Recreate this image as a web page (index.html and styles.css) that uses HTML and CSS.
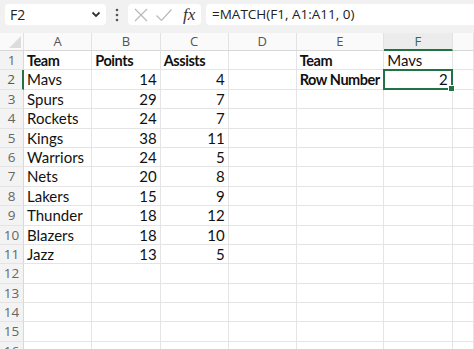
FILE: index.html
```html
<!DOCTYPE html>
<html lang="en">
<head>
    <meta charset="UTF-8">
    <meta name="viewport" content="width=device-width, initial-scale=1.0">
    <title>MATCH</title>
    <link rel="stylesheet" href="styles.css">
</head>
<body>
    <div class="toolbar">
        <div class="name-box">
            <span>F2</span>
            <svg class="chevron" width="10" height="7" viewBox="0 0 10 7"><path d="M1.5 1.5 L5 5 L8.5 1.5" fill="none" stroke="#333" stroke-width="1.8"/></svg>
        </div>
        <div class="dots">
            <svg width="4" height="14" viewBox="0 0 4 14"><circle cx="2" cy="2" r="1.3" fill="#555"/><circle cx="2" cy="7" r="1.3" fill="#555"/><circle cx="2" cy="12" r="1.3" fill="#555"/></svg>
        </div>
        <div class="actions">
            <svg width="16" height="16" viewBox="0 0 16 16"><path d="M2 2 L14 14 M14 2 L2 14" stroke="#b8b8b8" stroke-width="1.2" fill="none"/></svg>
            <svg width="18" height="16" viewBox="0 0 18 16"><path d="M1.5 8.5 L6.5 13.5 L16.5 2.5" stroke="#b8b8b8" stroke-width="1.2" fill="none"/></svg>
            <span class="fx">fx</span>
        </div>
        <div class="formula">=MATCH(F1, A1:A11, 0)</div>
    </div>

    <div class="sheet" id="sheet"></div>

    <script>
        // last column is only partly visible, so its letter is left out
        const cols = ["A", "B", "C", "D", "E", "F", ""];
        const data = {
            1: [["Team", "b"], ["Points", "b"], ["Assists", "b"], [""], ["Team", "b"], ["Mavs"]],
            2: [["Mavs"], ["14", "n"], ["4", "n"], [""], ["Row Number", "b"], ["2", "n sel"]],
            3: [["Spurs"], ["29", "n"], ["7", "n"]],
            4: [["Rockets"], ["24", "n"], ["7", "n"]],
            5: [["Kings"], ["38", "n"], ["11", "n"]],
            6: [["Warriors"], ["24", "n"], ["5", "n"]],
            7: [["Nets"], ["20", "n"], ["8", "n"]],
            8: [["Lakers"], ["15", "n"], ["9", "n"]],
            9: [["Thunder"], ["18", "n"], ["12", "n"]],
            10: [["Blazers"], ["18", "n"], ["10", "n"]],
            11: [["Jazz"], ["13", "n"], ["5", "n"]]
        };

        const sheet = document.getElementById("sheet");
        let html = '<div class="corner"><span></span></div>';
        cols.forEach(c => {
            html += `<div class="col-head${c === "F" ? " active" : ""}">${c}</div>`;
        });
        for (let r = 1; r <= 16; r++) {
            html += `<div class="row-head${r === 2 ? " active" : ""}">${r}</div>`;
            const row = data[r] || [];
            cols.forEach((c, i) => {
                const cell = row[i] || [""];
                html += `<div class="cell ${cell[1] || ""}">${cell[0]}</div>`;
            });
        }
        sheet.innerHTML = html;
    </script>
</body>
</html>
```

FILE: styles.css
```css
* {
    box-sizing: border-box;
}
body {
    margin: 0;
    padding: 0;
    width: 474px;
    height: 349px;
    overflow: hidden;
    background: #fff;
    font-family: Lato, "Open Sans", sans-serif;
}
.toolbar {
    height: 33px;
    background: #f1f1f1;
    display: flex;
    align-items: flex-start;
    padding-top: 4px;
    padding-left: 5px;
}
.name-box {
    width: 101px;
    height: 21px;
    background: #fff;
    border-radius: 4px;
    display: flex;
    align-items: center;
    justify-content: space-between;
    padding: 0 5px 0 5px;
    font-family: "Open Sans", sans-serif;
    font-size: 14px;
    color: #222;
}
.dots {
    width: 22px;
    height: 21px;
    display: flex;
    align-items: center;
    justify-content: center;
}
.actions {
    width: 73px;
    height: 21px;
    background: #fff;
    border-radius: 4px;
    display: flex;
    align-items: center;
    gap: 6px;
    padding-left: 5px;
}
.fx {
    font-family: "Liberation Serif", serif;
    font-style: italic;
    font-size: 17px;
    color: #333;
    margin-left: 4px;
}
.formula {
    flex: 1;
    height: 21px;
    margin-left: 5px;
    background: #fff;
    border-radius: 4px 0 0 4px;
    padding-left: 6px;
    font-family: "Open Sans", sans-serif;
    font-size: 13.5px;
    line-height: 21px;
    color: #222;
}
.sheet {
    display: grid;
    width: 474px;
    grid-template-columns: 24px 68.3px 68.4px 68px 68px 87.6px 68.4px 1fr;
    grid-template-rows: 18px;
    grid-auto-rows: 19.4px;
    font-size: 15px;
    color: #111;
}
.corner {
    background: #fafafa;
    border-right: 1px solid #e2e2e2;
    border-bottom: 1px solid #d8d8d8;
    position: relative;
}
.corner span {
    position: absolute;
    right: 2px;
    bottom: 2px;
    width: 0;
    height: 0;
    border-left: 12px solid transparent;
    border-bottom: 12px solid #dcdcdc;
}
.col-head {
    background: #fafafa;
    border-right: 1px solid #e2e2e2;
    border-bottom: 1px solid #d8d8d8;
    text-align: center;
    font-size: 13px;
    line-height: 17px;
    color: #555;
    font-family: "Open Sans", sans-serif;
}
.col-head.active {
    background: #ececec;
    color: #2f6e4a;
    border-bottom: 2px solid #217346;
}
.row-head {
    background: #f3f3f3;
    border-bottom: 1px solid #e4e4e4;
    border-right: 1px solid #d8d8d8;
    text-align: center;
    font-size: 13.5px;
    line-height: 19px;
    color: #666;
    font-family: "Open Sans", sans-serif;
}
.row-head.active {
    border-right: 2px solid #217346;
    color: #2f6e4a;
}
.cell {
    border-right: 1px solid #e4e4e4;
    border-bottom: 1px solid #e4e4e4;
    padding: 0 3px;
    line-height: 19px;
    white-space: nowrap;
}
.cell.b {
    font-weight: bold;
    font-size: 14.5px;
    letter-spacing: -0.45px;
}
.cell.n {
    text-align: right;
}
.cell.sel {
    position: relative;
    border: 2px solid #217346;
    margin: -1px 0 0 -1px;
    line-height: 17px;
}
.cell.sel::after {
    content: "";
    position: absolute;
    right: -4px;
    bottom: -4px;
    width: 5px;
    height: 5px;
    background: #217346;
    border: 1px solid #fff;
}
```
